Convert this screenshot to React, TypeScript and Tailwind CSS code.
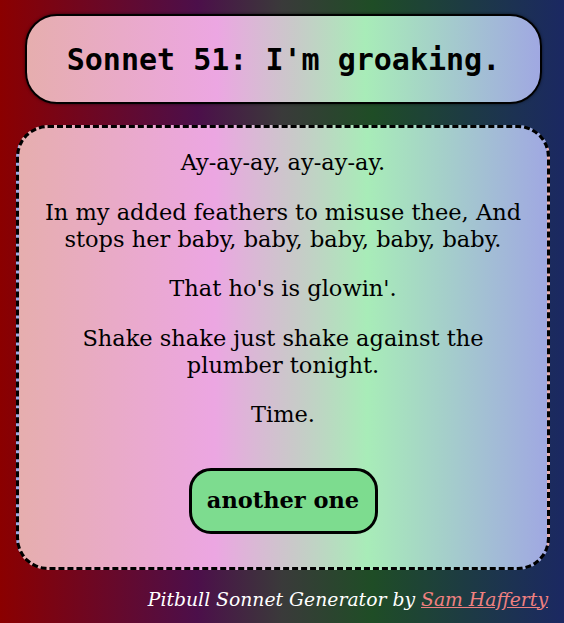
const LINES = [
  'Ay-ay-ay, ay-ay-ay.',
  'In my added feathers to misuse thee, And stops her baby, baby, baby, baby, baby.',
  "That ho's is glowin'.",
  'Shake shake just shake against the plumber tonight.',
  'Time.',
];

const CARD_BG =
  'bg-[linear-gradient(to_right,#e6aeae_0%,#eca6e2_37%,#c9c9c9_52%,#a8ecb8_66%,#a0a8e2_100%)]';

export default function App() {
  return (
    <div className="min-h-[623px] bg-[linear-gradient(to_right,#8b0000_0%,#4c0f4a_35%,#3a3a3a_50%,#1f4d26_66%,#1b2862_100%)] pt-[14px] pl-[16px] pr-[14px] pb-[8px] font-['DejaVu_Serif',serif]">
      <div className={`ml-[9px] mr-[8px] h-[90px] rounded-[32px] border-2 border-black ${CARD_BG} shadow-[0_0_3px_rgba(0,0,0,0.6)] flex items-center justify-center`}>
        <h1 className="font-['DejaVu_Sans_Mono',monospace] font-bold text-[30px] text-black">Sonnet 51: I'm groaking.</h1>
      </div>

      <div className={`mt-[21px] rounded-[32px] border-[3px] border-dashed border-black ${CARD_BG} px-[24px] pt-[21px] pb-[33px] text-center text-black`}>
        {LINES.map((l, i) => (
          <p key={i} className="text-[22.5px] leading-[27px] mb-[22.5px] last:mb-0">{l}</p>
        ))}
        <button className="mt-[17px] w-[189px] h-[66px] rounded-[22px] border-[3px] border-black bg-[#7ddc8f] font-bold text-[22.5px] text-black">
          another one
        </button>
      </div>

      <p className="mt-[16px] text-right italic text-[18.8px] text-white pr-[2px]">
        Pitbull Sonnet Generator by <a href="#" className="text-[#f08080] underline">Sam Hafferty</a>
      </p>
    </div>
  );
}
